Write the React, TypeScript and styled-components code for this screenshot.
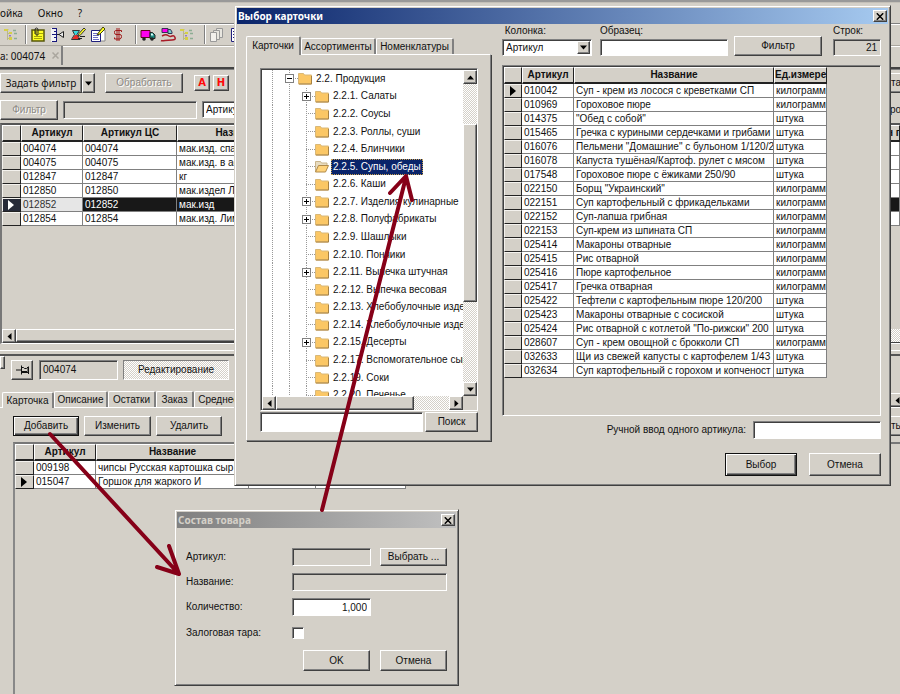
import React from "react";
import styled, { createGlobalStyle, css } from "styled-components";

const face = "#d4d0c8";
const shade = "#808080";
const dark = "#404040";
const arrowRed = "#860018";

const Global = createGlobalStyle`
  * { box-sizing: border-box; }
  body { margin: 0; background: ${face}; color: #111; font: 10px/12px "Liberation Sans", Arial, sans-serif; overflow: hidden; }
  button, input, select { font: inherit; color: inherit; margin: 0; border-radius: 0; }
`;

const raised = css`
  background: ${face};
  border: 1px solid;
  border-color: #fff ${dark} ${dark} #fff;
  box-shadow: inset -1px -1px 0 ${shade};
`;
const sunken = css`
  border: 1px solid;
  border-color: ${shade} #fff #fff ${shade};
  box-shadow: inset 1px 1px 0 ${dark};
`;
const dither = css`
  background: repeating-conic-gradient(#fff 0 25%, ${face} 0 50%) 0 0 / 2px 2px;
`;

/* ---------- shared controls ---------- */

const Button = styled.button<{ $w?: number; $h?: number; $default?: boolean }>`
  ${raised}
  display: flex;
  align-items: center;
  justify-content: center;
  flex: none;
  width: ${(p) => (p.$w ? `${p.$w}px` : "auto")};
  height: ${(p) => p.$h ?? 20}px;
  padding: 0;
  white-space: nowrap;
  ${(p) =>
    p.$default &&
    css`
      border-color: #111;
      box-shadow: inset 1px 1px 0 #fff, inset -1px -1px 0 ${dark}, inset -2px -2px 0 ${shade};
    `}
  &:disabled {
    color: #8c8984;
    text-shadow: 1px 1px 0 #fff;
  }
`;

const Field = styled.input<{ $w?: number; $h?: number; $right?: boolean }>`
  ${sunken}
  display: block;
  flex: none;
  width: ${(p) => (p.$w ? `${p.$w}px` : "100%")};
  height: ${(p) => p.$h ?? 18}px;
  padding: 0 3px;
  background: #fff;
  outline: none;
  text-align: ${(p) => (p.$right ? "right" : "left")};
  &:read-only {
    background: ${face};
  }
`;

const SelectWrap = styled.div<{ $w: number }>`
  position: relative;
  flex: none;
  width: ${(p) => p.$w}px;
`;
const SelectBox = styled.select`
  ${sunken}
  appearance: none;
  display: block;
  width: 100%;
  height: 17px;
  padding: 0 18px 0 3px;
  background: #fff;
  outline: none;
`;
const SelectArrow = styled.span`
  ${raised}
  position: absolute;
  inset: 2px 2px 2px auto;
  width: 13px;
  display: grid;
  place-items: center;
  pointer-events: none;
`;

type Dir = "up" | "down" | "left" | "right";
const arrowPaths: Record<Dir, string> = {
  up: "M0 5.5 L3.5 1.5 L7 5.5Z",
  down: "M0 1.5 L3.5 5.5 L7 1.5Z",
  left: "M5.5 0 L1.5 3.5 L5.5 7Z",
  right: "M1.5 0 L5.5 3.5 L1.5 7Z",
};
const Arrow = ({ dir }: { dir: Dir }) => (
  <svg width="7" height="7" viewBox="0 0 7 7" aria-hidden="true">
    <path d={arrowPaths[dir]} fill="#000" />
  </svg>
);

const Select = ({ value, width, label, id }: { value: string; width: number; label?: string; id?: string }) => (
  <SelectWrap $w={width}>
    <SelectBox id={id} aria-label={label} defaultValue={value}>
      <option>{value}</option>
      <option>Название</option>
    </SelectBox>
    <SelectArrow>
      <Arrow dir="down" />
    </SelectArrow>
  </SelectWrap>
);

/* ---------- data grid ---------- */

const Table = styled.table<{ $full?: boolean }>`
  border-collapse: separate;
  border-spacing: 0;
  table-layout: fixed;
  width: ${(p) => (p.$full ? "100%" : "0")};
`;
const HeadCell = styled.th`
  height: 17px;
  padding: 0;
  overflow: hidden;
  white-space: nowrap;
  font-weight: bold;
  background: ${face};
  border: 1px solid;
  border-color: #fff #222 #222 #fff;
  border-bottom-width: 2px;
`;
const Cell = styled.td`
  height: 14px;
  padding: 0 0 0 2px;
  line-height: 13px;
  overflow: hidden;
  white-space: nowrap;
  background: #fff;
  border: solid ${shade};
  border-width: 0 1px 1px 0;
`;
const RowMark = styled.td<{ $dark?: boolean }>`
  height: 14px;
  padding: 0 0 0 5px;
  line-height: 0;
  background: ${(p) => (p.$dark ? "#262a38" : face)};
  border: 1px solid;
  border-color: #f4f2ee #222 #222 #f4f2ee;
`;
const Row = styled.tr<{ $dark?: boolean }>`
  ${(p) =>
    p.$dark &&
    css`
      ${Cell} {
        background: #181818;
        color: #fff;
      }
      ${Cell}:nth-child(2) {
        background: #e6e6e6;
        color: #333;
      }
    `}
`;
const Marker = ({ color }: { color: string }) => (
  <svg width="6" height="10" viewBox="0 0 6 10" aria-hidden="true">
    <path d="M0 0 L6 5 L0 10Z" fill={color} />
  </svg>
);

interface GridProps {
  widths: (number | undefined)[];
  heads: string[];
  rows: string[][];
  current: number;
  dark?: boolean;
  full?: boolean;
}
const DataGrid = ({ widths, heads, rows, current, dark: inverse, full }: GridProps) => (
  <Table $full={full}>
    <colgroup>
      {widths.map((w, i) => (
        <col key={i} width={w} />
      ))}
    </colgroup>
    <thead>
      <tr>
        <HeadCell aria-label="Текущая строка" />
        {heads.map((h, i) => (
          <HeadCell key={i}>{h}</HeadCell>
        ))}
      </tr>
    </thead>
    <tbody>
      {rows.map((r, i) => (
        <Row key={i} $dark={inverse && i === current}>
          <RowMark $dark={inverse && i === current}>
            {i === current && <Marker color={inverse ? "#fff" : "#000"} />}
          </RowMark>
          {r.map((c, j) => (
            <Cell key={j}>{c}</Cell>
          ))}
        </Row>
      ))}
    </tbody>
  </Table>
);

/* ---------- tabs ---------- */

const TabRow = styled.div<{ $x?: number }>`
  display: flex;
  align-items: flex-end;
  padding-left: ${(p) => p.$x ?? 0}px;
`;
const Tab = styled.button<{ $w: number; $active?: boolean; $tall?: boolean }>`
  flex: none;
  width: ${(p) => p.$w}px;
  height: ${(p) => (p.$active && p.$tall ? 19 : 16)}px;
  margin-bottom: ${(p) => (p.$active ? -1 : 0)}px;
  padding: 0;
  background: ${face};
  border: solid;
  border-width: 1px 2px 0 1px;
  border-color: #fff ${shade} #fff #fff;
  border-radius: 2px 2px 0 0;
  white-space: nowrap;
  overflow: hidden;
  position: relative;
  z-index: ${(p) => (p.$active ? 1 : 0)};
`;

/* ---------- main window ---------- */

const Desktop = styled.main`
  position: relative;
  min-height: 100vh;
  overflow: hidden;
  background: ${face};
`;
const Caption = styled.div`
  height: 3px;
  background: #999;
  border-bottom: 1px solid #c4c0b8;
`;
const MenuBar = styled.nav`
  display: flex;
  align-items: center;
  gap: 15px;
  height: 20px;
  font-family: "Noto Sans", sans-serif;
`;
const MenuItem = styled.button`
  border: 0;
  padding: 0;
  background: none;
`;
const Bar = styled.div`
  display: flex;
  align-items: center;
  height: 23px;
  border-top: 1px solid ${shade};
  border-bottom: 1px solid #aaa69e;
  box-shadow: inset 0 1px 0 #fff, 0 1px 0 #fff;
`;
const ToolGroup = styled.div<{ $w: number }>`
  display: flex;
  align-items: center;
  gap: 4px;
  flex: none;
  width: ${(p) => p.$w}px;
  height: 19px;
  padding-left: 4px;
  border-right: 1px solid ${shade};
  box-shadow: 1px 0 0 #fff;
`;
const ToolButton = styled.button`
  flex: none;
  width: 16px;
  height: 18px;
  padding: 1px 0;
  border: 0;
  background: none;
  line-height: 0;
`;
const DocTabs = styled.div`
  height: 21px;
`;
const DocTab = styled.button`
  display: flex;
  align-items: center;
  gap: 7px;
  width: 63px;
  height: 19px;
  padding: 0;
  background: ${face};
  border: solid ${shade};
  border-width: 0 2px 0 0;
  font-family: "Noto Sans", sans-serif;
  white-space: nowrap;
`;
const Rule = styled.div`
  height: 3px;
  background: #444;
  border-bottom: 1px solid ${shade};
`;
const ControlRow = styled.div<{ $h: number }>`
  display: flex;
  align-items: center;
  height: ${(p) => p.$h}px;
`;
const Gap = styled.span<{ $w: number }>`
  flex: none;
  width: ${(p) => p.$w}px;
`;
const EdgeSlot = styled.div`
  width: 10px;
  margin-left: auto;
  overflow: hidden;
`;
const EdgeButton = styled(Button)`
  width: 60px;
  justify-content: flex-start;
`;
const MainGrid = styled.section`
  border: solid;
  border-width: 2px 0 1px 2px;
  border-color: #555 #fff #fff #777;
`;
const GridSpace = styled.div`
  height: 103px;
`;
const HScroll = styled.div`
  display: flex;
  height: 14px;
  ${dither}
  border-bottom: 1px solid ${dark};
`;
const ScrollButton = styled.button`
  ${raised}
  display: grid;
  place-items: center;
  flex: none;
  width: 14px;
  height: 14px;
  padding: 0;
`;
const ScrollThumb = styled.div<{ $w?: number; $h?: number }>`
  ${raised}
  flex: none;
  width: ${(p) => (p.$w ? `${p.$w}px` : "auto")};
  height: ${(p) => (p.$h ? `${p.$h}px` : "auto")};
`;
const WideThumb = styled(ScrollThumb)`
  width: 72%;
`;
const Splitter = styled.div`
  height: 12px;
  border-bottom: 2px solid #555;
  background: linear-gradient(#fff, #fff) 0 6px / 100% 1px no-repeat;
`;
const CardBar = styled.div`
  display: flex;
  align-items: center;
  height: 35px;
  padding-bottom: 8px;
`;
const CloseStub = styled(Button)`
  align-self: flex-start;
`;
const EditMode = styled.button`
  ${dither}
  width: 106px;
  height: 20px;
  margin-left: 5px;
  padding: 0;
  border: 1px solid;
  border-color: ${shade} #fff #fff ${shade};
`;
const CardPanel = styled.section`
  border-top: 1px solid #fff;
  padding: 8px 0 0 13px;
`;
const ButtonRow = styled.div<{ $gap: number }>`
  display: flex;
  gap: ${(p) => p.$gap}px;
`;
const LowerGrid = styled.div`
  min-height: 252px;
  margin-top: 6px;
  border-top: 2px solid #777;
  border-left: 2px solid #888;
`;

/* ---------- dialogs ---------- */

const Dialog = styled.section`
  position: absolute;
  background: ${face};
  border: 1px solid;
  border-color: ${face} ${dark} ${dark} ${face};
  box-shadow: inset 1px 1px 0 #fff, inset -1px -1px 0 ${shade};
  padding: 2px;
`;
const PickDialog = styled(Dialog)`
  left: 234px;
  right: 9px;
  top: 5px;
`;
const PartDialog = styled(Dialog)`
  left: 174px;
  top: 509px;
  width: 285px;
`;
const Title = styled.header<{ $off?: boolean }>`
  display: flex;
  align-items: center;
  justify-content: space-between;
  height: 16px;
  padding: 0 1px;
  color: ${(p) => (p.$off ? face : "#fff")};
  background: ${(p) =>
    p.$off ? "linear-gradient(90deg, #808080, #c0c0c0)" : "linear-gradient(90deg, #0a246a, #a6caf0)"};
`;
const TitleText = styled.h2`
  margin: 0;
  font: bold 10px/14px "Noto Sans", sans-serif;
`;
const CloseButton = ({ label }: { label: string }) => (
  <Button $w={14} $h={12} aria-label={label}>
    <svg width="8" height="7" viewBox="0 0 8 7" aria-hidden="true">
      <path d="M.8 .3 L7.2 6.7 M7.2 .3 L.8 6.7" stroke="#000" strokeWidth="1.5" />
    </svg>
  </Button>
);
const PickBody = styled.div`
  display: grid;
  grid-template-columns: 245px minmax(0, 1fr);
  column-gap: 11px;
  padding: 0 7px 7px 9px;
`;
const TreeSide = styled.div`
  padding-top: 12px;
`;
const TreePanel = styled.div`
  border: 1px solid;
  border-color: #fff ${shade} ${shade} #fff;
  box-shadow: 1px 1px 0 ${dark};
  padding: 13px 12px 8px 13px;
`;
const TreeBox = styled.div`
  ${sunken}
  padding: 1px 0 0 1px;
`;
const TreeView = styled.div`
  display: grid;
  grid-template-columns: minmax(0, 1fr) 14px;
  height: 326px;
`;
const TreeList = styled.ul`
  display: grid;
  grid-auto-rows: 1fr;
  height: 334px;
  margin: 0;
  padding: 0 0 0 2px;
  list-style: none;
`;
const TreeClip = styled.div`
  overflow: hidden;
  background: #fff;
`;
const TreeRow = styled.li`
  display: flex;
  align-items: center;
  min-height: 0;
  white-space: nowrap;
`;
const vDots = "repeating-linear-gradient(#999 0 1px, transparent 1px 2px) 8px 0 / 1px 100% no-repeat";
const hDots = "repeating-linear-gradient(90deg, #999 0 1px, transparent 1px 2px) 8px 50% / 9px 1px no-repeat";
const Guide = styled.span<{ $stub?: boolean }>`
  display: grid;
  place-items: center;
  flex: none;
  align-self: stretch;
  width: 17px;
  background: ${(p) => (p.$stub ? `${vDots}, ${hDots}` : vDots)};
`;
const Toggle = styled.button`
  display: block;
  width: 9px;
  height: 9px;
  padding: 0;
  border: 1px solid ${shade};
  background: #fff;
  line-height: 0;
`;
const TreeLabel = styled.span<{ $on?: boolean }>`
  margin-left: 2px;
  padding: 2px;
  ${(p) =>
    p.$on &&
    css`
      background: #0a246a;
      color: #fff;
      outline: 1px dotted #c8a050;
      outline-offset: -1px;
    `}
`;
const VScroll = styled.div`
  display: flex;
  flex-direction: column;
  ${dither}
`;
const Track = styled.div<{ $size?: number }>`
  flex: ${(p) => (p.$size ? `0 0 ${p.$size}px` : "1")};
`;
const TreeHScroll = styled.div`
  display: flex;
  height: 14px;
  margin-right: 14px;
  ${dither}
`;
const SearchRow = styled.div`
  display: flex;
  gap: 2px;
  margin-top: 1px;
`;
const Grow = styled.div`
  flex: 1;
  min-width: 0;
`;
const ListSide = styled.div`
  padding-top: 1px;
`;
const FilterRow = styled.div`
  display: flex;
  align-items: flex-end;
  height: 31px;
`;
const Labeled = styled.div<{ $w: number; $ml?: number }>`
  display: flex;
  flex-direction: column;
  gap: 2px;
  flex: none;
  width: ${(p) => p.$w}px;
  margin-left: ${(p) => p.$ml ?? 0}px;
`;
const PushRight = styled(Labeled)`
  margin-left: auto;
`;
const ListBox = styled.div`
  ${sunken}
  min-height: 351px;
  margin-top: 9px;
  padding: 1px 0 0 1px;
`;
const ManualRow = styled.div`
  display: flex;
  align-items: center;
  justify-content: flex-end;
  gap: 7px;
  margin-top: 5px;
`;
const ActionRow = styled.div<{ $gap: number; $top: number }>`
  display: flex;
  justify-content: flex-end;
  gap: ${(p) => p.$gap}px;
  margin-top: ${(p) => p.$top}px;
`;
const PartForm = styled.form`
  padding: 19px 9px 12px;
`;
const FormRow = styled.div<{ $h: number }>`
  display: grid;
  grid-template-columns: 106px minmax(0, 1fr);
  align-items: center;
  height: ${(p) => p.$h}px;
`;
const FormInputs = styled.div`
  display: flex;
  justify-content: space-between;
`;
const Check = styled.input`
  ${sunken}
  appearance: none;
  width: 12px;
  height: 12px;
  margin: 0;
  background: #fff;
`;
const Annotations = styled.svg`
  position: absolute;
  left: 0;
  top: 0;
  pointer-events: none;
`;

/* ---------- icons ---------- */

const Ico = ({ children }: { children: React.ReactNode }) => (
  <svg width="16" height="16" viewBox="0 0 16 16" aria-hidden="true">
    {children}
  </svg>
);
const TreeIcon = () => (
  <Ico>
    <path d="M1.5 2.5h3M3.5 4v9M3.5 6.5h4M3.5 11.5h4" stroke="#b9b78c" fill="none" />
    <path d="M0 2h4v2H0zM5 5h3v2H5zM5 10h3v3H5z" fill="#d5cf45" />
    <path d="M9 3.5h3M10 6.5h3M10 11.5h3" stroke="#8cad93" strokeWidth="1.5" />
    <path d="M5 8h2v1.500H5z" fill="#9b78bd" />
  </Ico>
);
const LedgerIcon = () => (
  <Ico>
    <rect x="2" y="3" width="12" height="11" fill="#ffff22" stroke="#57570a" strokeWidth="1.500" />
    <path d="M9 6.500h4M4 9.500h8M4 11.500h8" stroke="#a5a50a" />
    <path d="M5 7V3q0-2 1.500-2T8 3v5H6V4" stroke="#222" fill="none" />
  </Ico>
);
const RulerIcon = () => (
  <Ico>
    <path d="M1 1h6v14H1z" fill="#f4f4f4" />
    <path d="M2 1.500h5M4 4.500h3M2 7.500h5M4 10.500h3M2 14.500h5M6.500 1v14" stroke="#17177c" fill="none" />
    <path d="M13.500 4.500v6L9 7.500zM7 7.500h2" fill="#eee" stroke="#222" />
  </Ico>
);
const BrushIcon = () => (
  <Ico>
    <path d="M2.500 3.500h7L7 7.500l3 5H1.500l3-5z" fill="#39d6dc" stroke="#333" />
    <path d="M2 12l3-4h2l3 4z" fill="#e92b25" />
    <path d="M14 1l1.500 1.500-5.500 6-2 1 1-3z" fill="#ff2" stroke="#333" />
    <path d="M10 9.500h5M8 11.500h4" stroke="#222" />
  </Ico>
);
const NotesIcon = () => (
  <Ico>
    <path d="M9 3h6v11H9z" fill="#fff" stroke="#888" />
    <path d="M1.500 3.500h9v11h-9z" fill="#fff" stroke="#20207d" />
    <path d="M3 6.500h5M3 8.500h6M3 10.500h5M3 12.500h6" stroke="#6d6dc4" />
    <path d="M13 0l2 2-5 5-3 1 2-3z" fill="#ff2" stroke="#44440a" />
  </Ico>
);
const DollarIcon = () => (
  <Ico>
    <path
      d="M11.500 5V3.500H5.500Q4.500 3.500 4.500 5.500T6 7.500h4q1.500 0 1.500 2T10 12H4.500v-1.500M7 1v13M9 1v13"
      fill="none"
      stroke="#a01818"
    />
  </Ico>
);
const TruckIcon = () => (
  <Ico>
    <path d="M1 3.500h9v7H1z" fill="#f0e" stroke="#602" />
    <path d="M10 5.500h2.500L15 8v3.500h-5z" fill="#1b8a80" stroke="#222" />
    <path d="M11 6.500h1.500l1 2H11z" fill="#dff" />
    <circle cx="4" cy="12" r="1.800" fill="#222" />
    <circle cx="12" cy="12" r="1.800" fill="#222" />
  </Ico>
);
const RouteIcon = () => (
  <Ico>
    <path d="M2 1.500h6v4H2z" fill="#f0e" stroke="#335" />
    <path d="M8 2.500h2.500L12 5v1.500H8z" fill="#7cc" stroke="#335" />
    <path d="M2 9q4-2 6-.5t4 .5 3 1.500-3 2.500-7 .5-4 0" fill="none" stroke="#a81c28" strokeWidth="1.500" />
  </Ico>
);
const CopyIcon = () => (
  <Ico>
    <path d="M7.500 1.500h6v9h-6z" fill="#e8e6e0" stroke="#999" />
    <path d="M4.500 3.500h6v9h-6z" fill="#e8e6e0" stroke="#999" />
    <path d="M1.500 5.500h6v9h-6z" fill="#f2f0ec" stroke="#999" />
  </Ico>
);
const SheetIcon = () => (
  <Ico>
    <path d="M2.500 1.500h11v13h-11z" fill="#fff" stroke="#22227e" />
    <path d="M4 4.500h8M4 7.500h8M4 10.500h8" stroke="#22227e" />
  </Ico>
);
const PinIcon = () => (
  <svg width="15" height="12" viewBox="0 0 15 12" aria-hidden="true">
    <path
      d="M1 6h5M6.500 1.500v9M6.500 3.500h2l1 1h2l1.500-1.500v6L11.500 7.500h-5M13.500 2.500v7.500"
      fill="none"
      stroke="#111"
    />
    <path d="M7 7h5v2H7z" fill="#111" />
  </svg>
);
const Folder = ({ open }: { open?: boolean }) => (
  <svg width="14" height="13" viewBox="0 0 14 13" aria-hidden="true">
    {open ? (
      <>
        <path d="M.5 12V1.500h5l1 1.500h5.500v3" fill="#e8dcc0" stroke="#c9b48a" />
        <path d="M3.500 5.500h10L10.500 12H.5z" fill="#ffd37b" stroke="#b08a4a" />
      </>
    ) : (
      <>
        <path d="M.5 1.500h5l1 1.500h7V12H.5z" fill="#fbc765" stroke="#d9b878" />
        <path d="M1 12h12.500V4" fill="none" stroke="#a78244" />
      </>
    )}
  </svg>
);

/* ---------- content ---------- */

const stockRows = [
  ["004074", "004074", "мак.изд. спагетти", "", ""],
  ["004075", "004075", "мак.изд. в ассорт.", "", ""],
  ["012847", "012847", "кг", "", ""],
  ["012850", "012850", "мак.издел Лимак", "", ""],
  ["012852", "012852", "мак.изд", "", ""],
  ["012854", "012854", "мак.изд. Лимак", "", ""],
];
const partRows = [
  ["009198", "чипсы Русская картошка сыр", "", ""],
  ["015047", "Горшок для жаркого И", "", ""],
];
const kg = "килограмм";
const pc = "штука";
const cardRows = [
  ["010042", "Суп - крем из лосося с креветками СП", kg],
  ["010969", "Гороховое пюре", kg],
  ["014375", '"Обед с собой"', pc],
  ["015465", "Гречка с куриными сердечками и грибами", pc],
  ["016076", 'Пельмени "Домашние" с бульоном 1/120/2', pc],
  ["016078", "Капуста тушёная/Картоф. рулет с мясом", pc],
  ["017548", "Гороховое пюре с ёжиками 250/90", pc],
  ["022150", 'Борщ "Украинский"', kg],
  ["022151", "Суп картофельный с фрикадельками", kg],
  ["022152", "Суп-лапша грибная", kg],
  ["022153", "Суп-крем из шпината СП", kg],
  ["025414", "Макароны отварные", kg],
  ["025415", "Рис отварной", kg],
  ["025416", "Пюре картофельное", kg],
  ["025417", "Гречка отварная", kg],
  ["025422", "Тефтели с картофельным пюре 120/200", pc],
  ["025423", "Макароны отварные с сосиской", pc],
  ["025424", 'Рис отварной с котлетой "По-рижски" 200', pc],
  ["028607", "Суп - крем овощной с брокколи СП", kg],
  ["032633", "Щи из свежей капусты с картофелем 1/43", pc],
  ["032634", "Суп картофельный с горохом и копченост", pc],
];
const treeItems: { text: string; plus?: boolean; on?: boolean }[] = [
  { text: "2.2.1. Салаты", plus: true },
  { text: "2.2.2. Соусы" },
  { text: "2.2.3. Роллы, суши" },
  { text: "2.2.4. Блинчики" },
  { text: "2.2.5. Супы, обеды", on: true },
  { text: "2.2.6. Каши" },
  { text: "2.2.7. Изделия кулинарные", plus: true },
  { text: "2.2.8. Полуфабрикаты", plus: true },
  { text: "2.2.9. Шашлыки" },
  { text: "2.2.10. Пончики" },
  { text: "2.2.11. Выпечка штучная", plus: true },
  { text: "2.2.12. Выпечка весовая" },
  { text: "2.2.13. Хлебобулочные издел" },
  { text: "2.2.14. Хлебобулочные издел" },
  { text: "2.2.15. Десерты", plus: true },
  { text: "2.2.17. Вспомогательное сыр" },
  { text: "2.2.19. Соки" },
  { text: "2.2.20. Печенье" },
];

const ToggleBox = ({ plus }: { plus?: boolean }) => (
  <Toggle aria-label={plus ? "Развернуть" : "Свернуть"}>
    <svg width="7" height="7" viewBox="0 0 7 7" aria-hidden="true">
      <path d={plus ? "M1 3.500h5M3.500 1v5" : "M1 3.500h5"} stroke="#000" />
    </svg>
  </Toggle>
);

const tools1: [string, React.ReactNode][] = [
  ["Карточка", <LedgerIcon />],
  ["Единицы", <RulerIcon />],
  ["Переоценка", <BrushIcon />],
  ["Документы", <NotesIcon />],
  ["Цены", <DollarIcon />],
];
const tools2: [string, React.ReactNode][] = [
  ["Доставка", <TruckIcon />],
  ["Маршрут", <RouteIcon />],
  ["Дерево", <TreeIcon />],
];
const tools3: [string, React.ReactNode][] = [
  ["Копировать", <CopyIcon />],
  ["Лист", <SheetIcon />],
];
const Tools = ({ items, width }: { items: [string, React.ReactNode][]; width: number }) => (
  <ToolGroup $w={width}>
    {items.map(([name, icon]) => (
      <ToolButton key={name} aria-label={name}>
        {icon}
      </ToolButton>
    ))}
  </ToolGroup>
);

const SplitMain = styled(Button)`
  font-family: "Noto Sans", sans-serif;
`;
const LetterButton = styled(Button)`
  color: #ff0808;
  font-family: "DejaVu Sans", sans-serif;
  font-weight: bold;
  margin-right: 3px;
`;
const EdgeText = styled.span`
  white-space: nowrap;
`;

const MainWindow = () => (
  <>
    <Caption />
    <MenuBar>
      <MenuItem>ойка</MenuItem>
      <MenuItem>Окно</MenuItem>
      <MenuItem>?</MenuItem>
    </MenuBar>
    <Bar>
      <ToolGroup $w={26}>
        <ToolButton aria-label="Структура">
          <TreeIcon />
        </ToolButton>
      </ToolGroup>
      <Tools items={tools1} width={110} />
      <Tools items={tools2} width={69} />
      <Tools items={tools3} width={80} />
    </Bar>
    <DocTabs>
      <DocTab>
        <span>а: 004074</span>
        <svg width="7" height="7" viewBox="0 0 7 7" aria-hidden="true">
          <path d="M.5 .5l6 6M6.500 .5l-6 6" stroke="#aaa69e" strokeWidth="1.500" />
        </svg>
      </DocTab>
    </DocTabs>
    <Rule />
    <ControlRow $h={26}>
      <SplitMain $w={82}>Задать фильтр</SplitMain>
      <Button $w={13} aria-label="Варианты фильтра">
        <Arrow dir="down" />
      </Button>
      <Gap $w={10} />
      <Button $w={78} disabled>
        Обработать
      </Button>
      <Gap $w={11} />
      <LetterButton $w={16} $h={16}>
        А
      </LetterButton>
      <LetterButton $w={16} $h={16}>
        Н
      </LetterButton>
      <EdgeSlot>
        <EdgeButton>та</EdgeButton>
      </EdgeSlot>
    </ControlRow>
    <ControlRow $h={27}>
      <Button $w={58} disabled>
        Фильтр
      </Button>
      <Gap $w={5} />
      <Field $w={134} readOnly aria-label="Значение фильтра" />
      <Gap $w={5} />
      <Select value="Артикул" width={90} label="Колонка фильтра" />
      <EdgeSlot>
        <EdgeText>ро</EdgeText>
      </EdgeSlot>
    </ControlRow>
    <MainGrid>
      <DataGrid
        full
        dark
        widths={[19, 62, 94, 124, undefined, 14]}
        heads={["Артикул", "Артикул ЦС", "Название", "", "н п"]}
        rows={stockRows}
        current={4}
      />
      <GridSpace />
      <HScroll>
        <ScrollButton aria-label="Влево">
          <Arrow dir="left" />
        </ScrollButton>
        <WideThumb />
      </HScroll>
    </MainGrid>
    <Splitter />
    <CardBar>
      <CloseStub $w={5} $h={13} aria-label="Закрыть панель" />
      <Gap $w={6} />
      <Button $w={22} aria-label="Закрепить">
        <PinIcon />
      </Button>
      <Gap $w={6} />
      <Field $w={79} $h={20} readOnly defaultValue="004074" aria-label="Артикул карточки" />
      <EditMode>Редактирование</EditMode>
    </CardBar>
    <TabRow $x={2}>
      <Tab $w={52} $active>
        Карточка
      </Tab>
      <Tab $w={54}>Описание</Tab>
      <Tab $w={48}>Остатки</Tab>
      <Tab $w={38}>Заказ</Tab>
      <Tab $w={50}>Среднее</Tab>
      <EdgeSlot>
        <ScrollButton aria-label="Предыдущая вкладка">
          <Arrow dir="left" />
        </ScrollButton>
      </EdgeSlot>
    </TabRow>
    <CardPanel>
      <ButtonRow $gap={5}>
        <Button $w={66} $default>
          Добавить
        </Button>
        <Button $w={67}>Изменить</Button>
        <Button $w={66}>Удалить</Button>
        <EdgeSlot>
          <EdgeButton>ть</EdgeButton>
        </EdgeSlot>
      </ButtonRow>
      <LowerGrid>
        <DataGrid
          widths={[19, 62, 153, 67, 90]}
          heads={["Артикул", "Название", "", ""]}
          rows={partRows}
          current={1}
        />
      </LowerGrid>
    </CardPanel>
  </>
);

const CardPicker = () => (
  <PickDialog role="dialog" aria-label="Выбор карточки">
    <Title>
      <TitleText>Выбор карточки</TitleText>
      <CloseButton label="Закрыть выбор" />
    </Title>
    <PickBody>
      <TreeSide>
        <TabRow>
          <Tab $w={55} $active $tall>
            Карточки
          </Tab>
          <Tab $w={75}>Ассортименты</Tab>
          <Tab $w={78}>Номенклатуры</Tab>
        </TabRow>
        <TreePanel>
          <TreeBox>
            <TreeView>
              <TreeClip>
                <TreeList>
                  <TreeRow>
                    <Guide />
                    <Guide $stub>
                      <ToggleBox />
                    </Guide>
                    <Folder />
                    <TreeLabel>2.2. Продукция</TreeLabel>
                  </TreeRow>
                  {treeItems.map((t) => (
                    <TreeRow key={t.text}>
                      <Guide />
                      <Guide />
                      <Guide $stub>{t.plus && <ToggleBox plus />}</Guide>
                      <Folder open={t.on} />
                      <TreeLabel $on={t.on}>{t.text}</TreeLabel>
                    </TreeRow>
                  ))}
                </TreeList>
              </TreeClip>
              <VScroll>
                <ScrollButton aria-label="Вверх">
                  <Arrow dir="up" />
                </ScrollButton>
                <Track $size={40} />
                <ScrollThumb $h={178} />
                <Track />
                <ScrollButton aria-label="Вниз">
                  <Arrow dir="down" />
                </ScrollButton>
              </VScroll>
            </TreeView>
            <TreeHScroll>
              <ScrollButton aria-label="Дерево влево">
                <Arrow dir="left" />
              </ScrollButton>
              <ScrollThumb $w={138} />
              <Track />
              <ScrollButton aria-label="Дерево вправо">
                <Arrow dir="right" />
              </ScrollButton>
            </TreeHScroll>
          </TreeBox>
          <SearchRow>
            <Grow>
              <Field $h={20} aria-label="Строка поиска" />
            </Grow>
            <Button $w={53}>Поиск</Button>
          </SearchRow>
        </TreePanel>
      </TreeSide>
      <ListSide>
        <FilterRow>
          <Labeled $w={90}>
            <label htmlFor="pick-column">&nbsp;Колонка:</label>
            <Select value="Артикул" width={90} id="pick-column" />
          </Labeled>
          <Labeled $w={128} $ml={8}>
            <label htmlFor="pick-sample">Образец:</label>
            <Field id="pick-sample" $h={17} />
          </Labeled>
          <Gap $w={6} />
          <Button $w={88}>Фильтр</Button>
          <PushRight $w={48}>
            <label htmlFor="pick-count">Строк:</label>
            <Field id="pick-count" $h={17} $right readOnly defaultValue="21" />
          </PushRight>
        </FilterRow>
        <ListBox>
          <DataGrid
            widths={[18, 52, 200, 53]}
            heads={["Артикул", "Название", "Ед.измере"]}
            rows={cardRows}
            current={0}
          />
        </ListBox>
        <ManualRow>
          <label htmlFor="manual">Ручной ввод одного артикула:</label>
          <Field id="manual" $w={128} />
        </ManualRow>
        <ActionRow $gap={12} $top={14}>
          <Button $w={72} $h={23} $default>
            Выбор
          </Button>
          <Button $w={72} $h={23}>
            Отмена
          </Button>
        </ActionRow>
      </ListSide>
    </PickBody>
  </PickDialog>
);

const PartEditor = () => (
  <PartDialog role="dialog" aria-label="Состав товара">
    <Title $off>
      <TitleText>Состав товара</TitleText>
      <CloseButton label="Закрыть состав" />
    </Title>
    <PartForm onSubmit={(e) => e.preventDefault()}>
      <FormRow $h={20}>
        <label htmlFor="part-code">Артикул:</label>
        <FormInputs>
          <Field id="part-code" $w={79} readOnly />
          <Button type="button" $w={67} $h={18}>
            Выбрать ...
          </Button>
        </FormInputs>
      </FormRow>
      <FormRow $h={30}>
        <label htmlFor="part-name">Название:</label>
        <Field id="part-name" readOnly />
      </FormRow>
      <FormRow $h={20}>
        <label htmlFor="part-qty">Количество:</label>
        <Field id="part-qty" $w={79} $right defaultValue="1,000" />
      </FormRow>
      <FormRow $h={32}>
        <label htmlFor="part-deposit">Залоговая тара:</label>
        <Check id="part-deposit" type="checkbox" />
      </FormRow>
      <ActionRow $gap={10} $top={1}>
        <Button type="submit" $w={67} $h={21}>
          OK
        </Button>
        <Button type="button" $w={67} $h={21}>
          Отмена
        </Button>
      </ActionRow>
    </PartForm>
  </PartDialog>
);

export default function App() {
  return (
    <Desktop>
      <Global />
      <MainWindow />
      <CardPicker />
      <PartEditor />
      <Annotations width="430" height="590" viewBox="0 0 430 590" aria-hidden="true">
        <g fill="none" stroke={arrowRed} strokeWidth="4" strokeLinecap="round" strokeLinejoin="round">
          <path d="M50 434 L179 574 M169 546 L179 574 L157 567" />
          <path d="M322 510 L406 177 M390 193 L406 176 L412 200" />
        </g>
      </Annotations>
    </Desktop>
  );
}
